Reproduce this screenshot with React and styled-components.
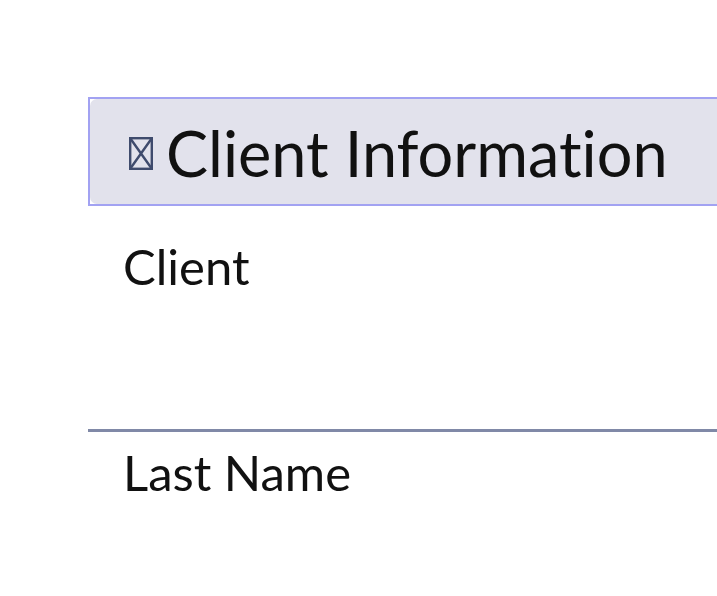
import React from "react";
import styled, { createGlobalStyle } from "styled-components";

const Global = createGlobalStyle`
  body {
    margin: 0;
    background: #fff;
    overflow: hidden;
    font-family: Lato, "Noto Sans", sans-serif;
    font-variant-ligatures: none;
    color: #111;
  }
`;

const Page = styled.div`
  padding: 97px 0 0 88px;
`;

const Panel = styled.section`
  width: calc(100vw - 88px);
`;

const Header = styled.div`
  border: 2px solid #a2a2f2;
  border-right: none;
  background: #fff;
`;

const HeaderInner = styled.div`
  height: 105px;
  background: #e2e2ec;
  border-radius: 7px 0 0 7px;
  display: flex;
  align-items: center;
  gap: 13px;
  padding: 3px 0 0 39px;
  box-sizing: border-box;
  overflow: hidden;
`;

const Title = styled.h2`
  margin: 0;
  font-size: 63px;
  font-weight: 400;
  line-height: 1.2;
  white-space: nowrap;
`;

const Field = styled.div`
  height: ${({ h }) => h}px;
  padding: ${({ top }) => top}px 0 0 35px;
  box-sizing: border-box;
  border-bottom: ${({ divided }) => (divided ? "3px solid #8089a7" : "none")};
`;

const Label = styled.div`
  font-size: 49px;
  line-height: 1.2;
  margin-top: -1px;
`;

const MissingGlyph = () => (
  <svg width="24" height="33" viewBox="0 0 24 33">
    <g fill="none" stroke="#3f4b6d" strokeWidth="2.4">
      <rect x="1.2" y="1.2" width="21.6" height="30.6" />
      <path d="M1.2 1.2 L22.8 31.8 M22.8 1.2 L1.2 31.8" />
    </g>
  </svg>
);

export default function App() {
  return (
    <>
      <Global />
      <Page>
        <Panel>
          <Header>
            <HeaderInner>
              <MissingGlyph />
              <Title>Client Information</Title>
            </HeaderInner>
          </Header>
          <Field h={226} top={32} divided>
            <Label>Client</Label>
          </Field>
          <Field h={120} top={12}>
            <Label>Last Name</Label>
          </Field>
        </Panel>
      </Page>
    </>
  );
}
